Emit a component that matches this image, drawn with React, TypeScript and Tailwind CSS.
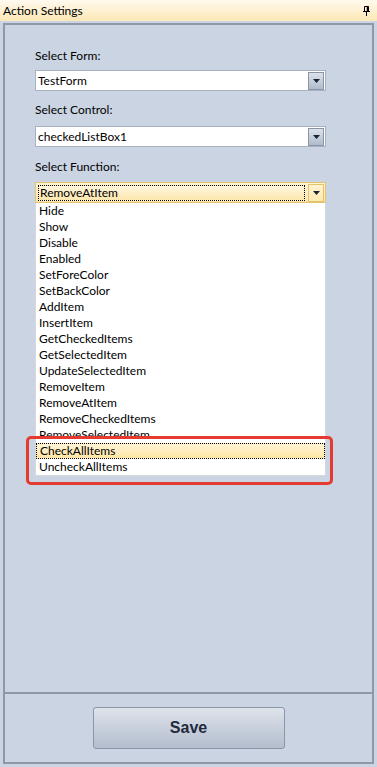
import React from 'react';

const functions = [
  'Hide',
  'Show',
  'Disable',
  'Enabled',
  'SetForeColor',
  'SetBackColor',
  'AddItem',
  'InsertItem',
  'GetCheckedItems',
  'GetSelectedItem',
  'UpdateSelectedItem',
  'RemoveItem',
  'RemoveAtItem',
  'RemoveCheckedItems',
  'RemoveSelectedItem',
  'CheckAllItems',
  'UncheckAllItems',
];

const Arrow = () => (
  <svg width="7" height="4" viewBox="0 0 7 4">
    <path d="M0 0h7L3.5 4z" fill="#1b2333" />
  </svg>
);

const ComboBox: React.FC<{ value: string }> = ({ value }) => (
  <div className="flex h-[21px] w-[291px] items-center border border-[#a7b1c0] bg-white pl-[2px] pr-[1px]">
    <span className="flex-1 leading-4">{value}</span>
    <div className="flex h-[18px] w-[16px] items-center justify-center border border-[#8994a5] bg-gradient-to-b from-[#dce2eb] to-[#b0bbcb]">
      <Arrow />
    </div>
  </div>
);

const App: React.FC = () => {
  return (
    <div className="relative flex h-[767px] w-[377px] flex-col bg-[#cbd4e2] font-['Lato','Liberation_Sans',sans-serif] text-[12px] text-black">
      {/* title bar */}
      <div className="flex h-[21px] items-center justify-between bg-gradient-to-b from-[#fffaee] to-[#fce7b5] pl-[3px] pr-[7px]">
        <span>Action Settings</span>
        <svg width="7" height="10" viewBox="0 0 7 10">
          <path d="M1.5 0.5h4v5h-4z" fill="none" stroke="#000" />
          <path d="M4.5 0.5v5" stroke="#000" strokeWidth="1.5" />
          <path d="M0 5.5h7M3.5 5.5v4.5" stroke="#000" />
        </svg>
      </div>

      <div className="mx-[3px] mt-[2px] mb-[3px] flex flex-1 flex-col border-2 border-[#8e98a6]">
        <div className="flex flex-1 flex-col pl-[30px] pt-[23px]">
          <div className="h-4 leading-4">Select Form:</div>
          <div className="mt-[6px]">
            <ComboBox value="TestForm" />
          </div>

          <div className="mt-[11px] h-4 leading-4">Select Control:</div>
          <div className="mt-[8px]">
            <ComboBox value="checkedListBox1" />
          </div>

          <div className="mt-[12px] h-4 leading-4">Select Function:</div>
          <div className="mt-[7px] flex h-[21px] w-[291px] items-center gap-[3px] border border-[#e3c36d] bg-gradient-to-b from-[#fff4d2] to-[#fde6a9] pl-[2px] pr-[1px]">
            <div className="flex h-[16px] flex-1 items-center border border-dotted border-black bg-gradient-to-b from-[#fff6dc] to-[#fde7ae] pl-px leading-4">
              RemoveAtItem
            </div>
            <div className="flex h-[18px] w-[16px] items-center justify-center border border-[#e3c36d] bg-gradient-to-b from-[#fff4d0] to-[#fde9b2]">
              <Arrow />
            </div>
          </div>

          <div className="w-[291px] border-x border-b border-[#d4d9e0] bg-white">
            {functions.map((f) => (
              <div
                key={f}
                className={`h-4 pl-[3px] leading-4 ${
                  f === 'CheckAllItems'
                    ? 'border border-dotted border-black bg-gradient-to-b from-[#fff4d6] to-[#fee6a6] pl-[2px] leading-[14px]'
                    : ''
                }`}
              >
                {f}
              </div>
            ))}
          </div>
        </div>

        <div className="flex h-[70px] items-center justify-center border-t-2 border-[#8e98a6]">
          <button className="h-[42px] w-[192px] rounded-[3px] border border-[#8a96a8] bg-gradient-to-b from-[#dfe4ec] to-[#b3bdcd] font-['Liberation_Sans',sans-serif] text-[16px] font-bold text-[#1f2a3c]">
            Save
          </button>
        </div>
      </div>

      {/* highlight annotation */}
      <div className="pointer-events-none absolute left-[26px] top-[436px] h-[49px] w-[307px] rounded-[5px] border-[3px] border-[#e53a2f]" />
    </div>
  );
};

export default App;
